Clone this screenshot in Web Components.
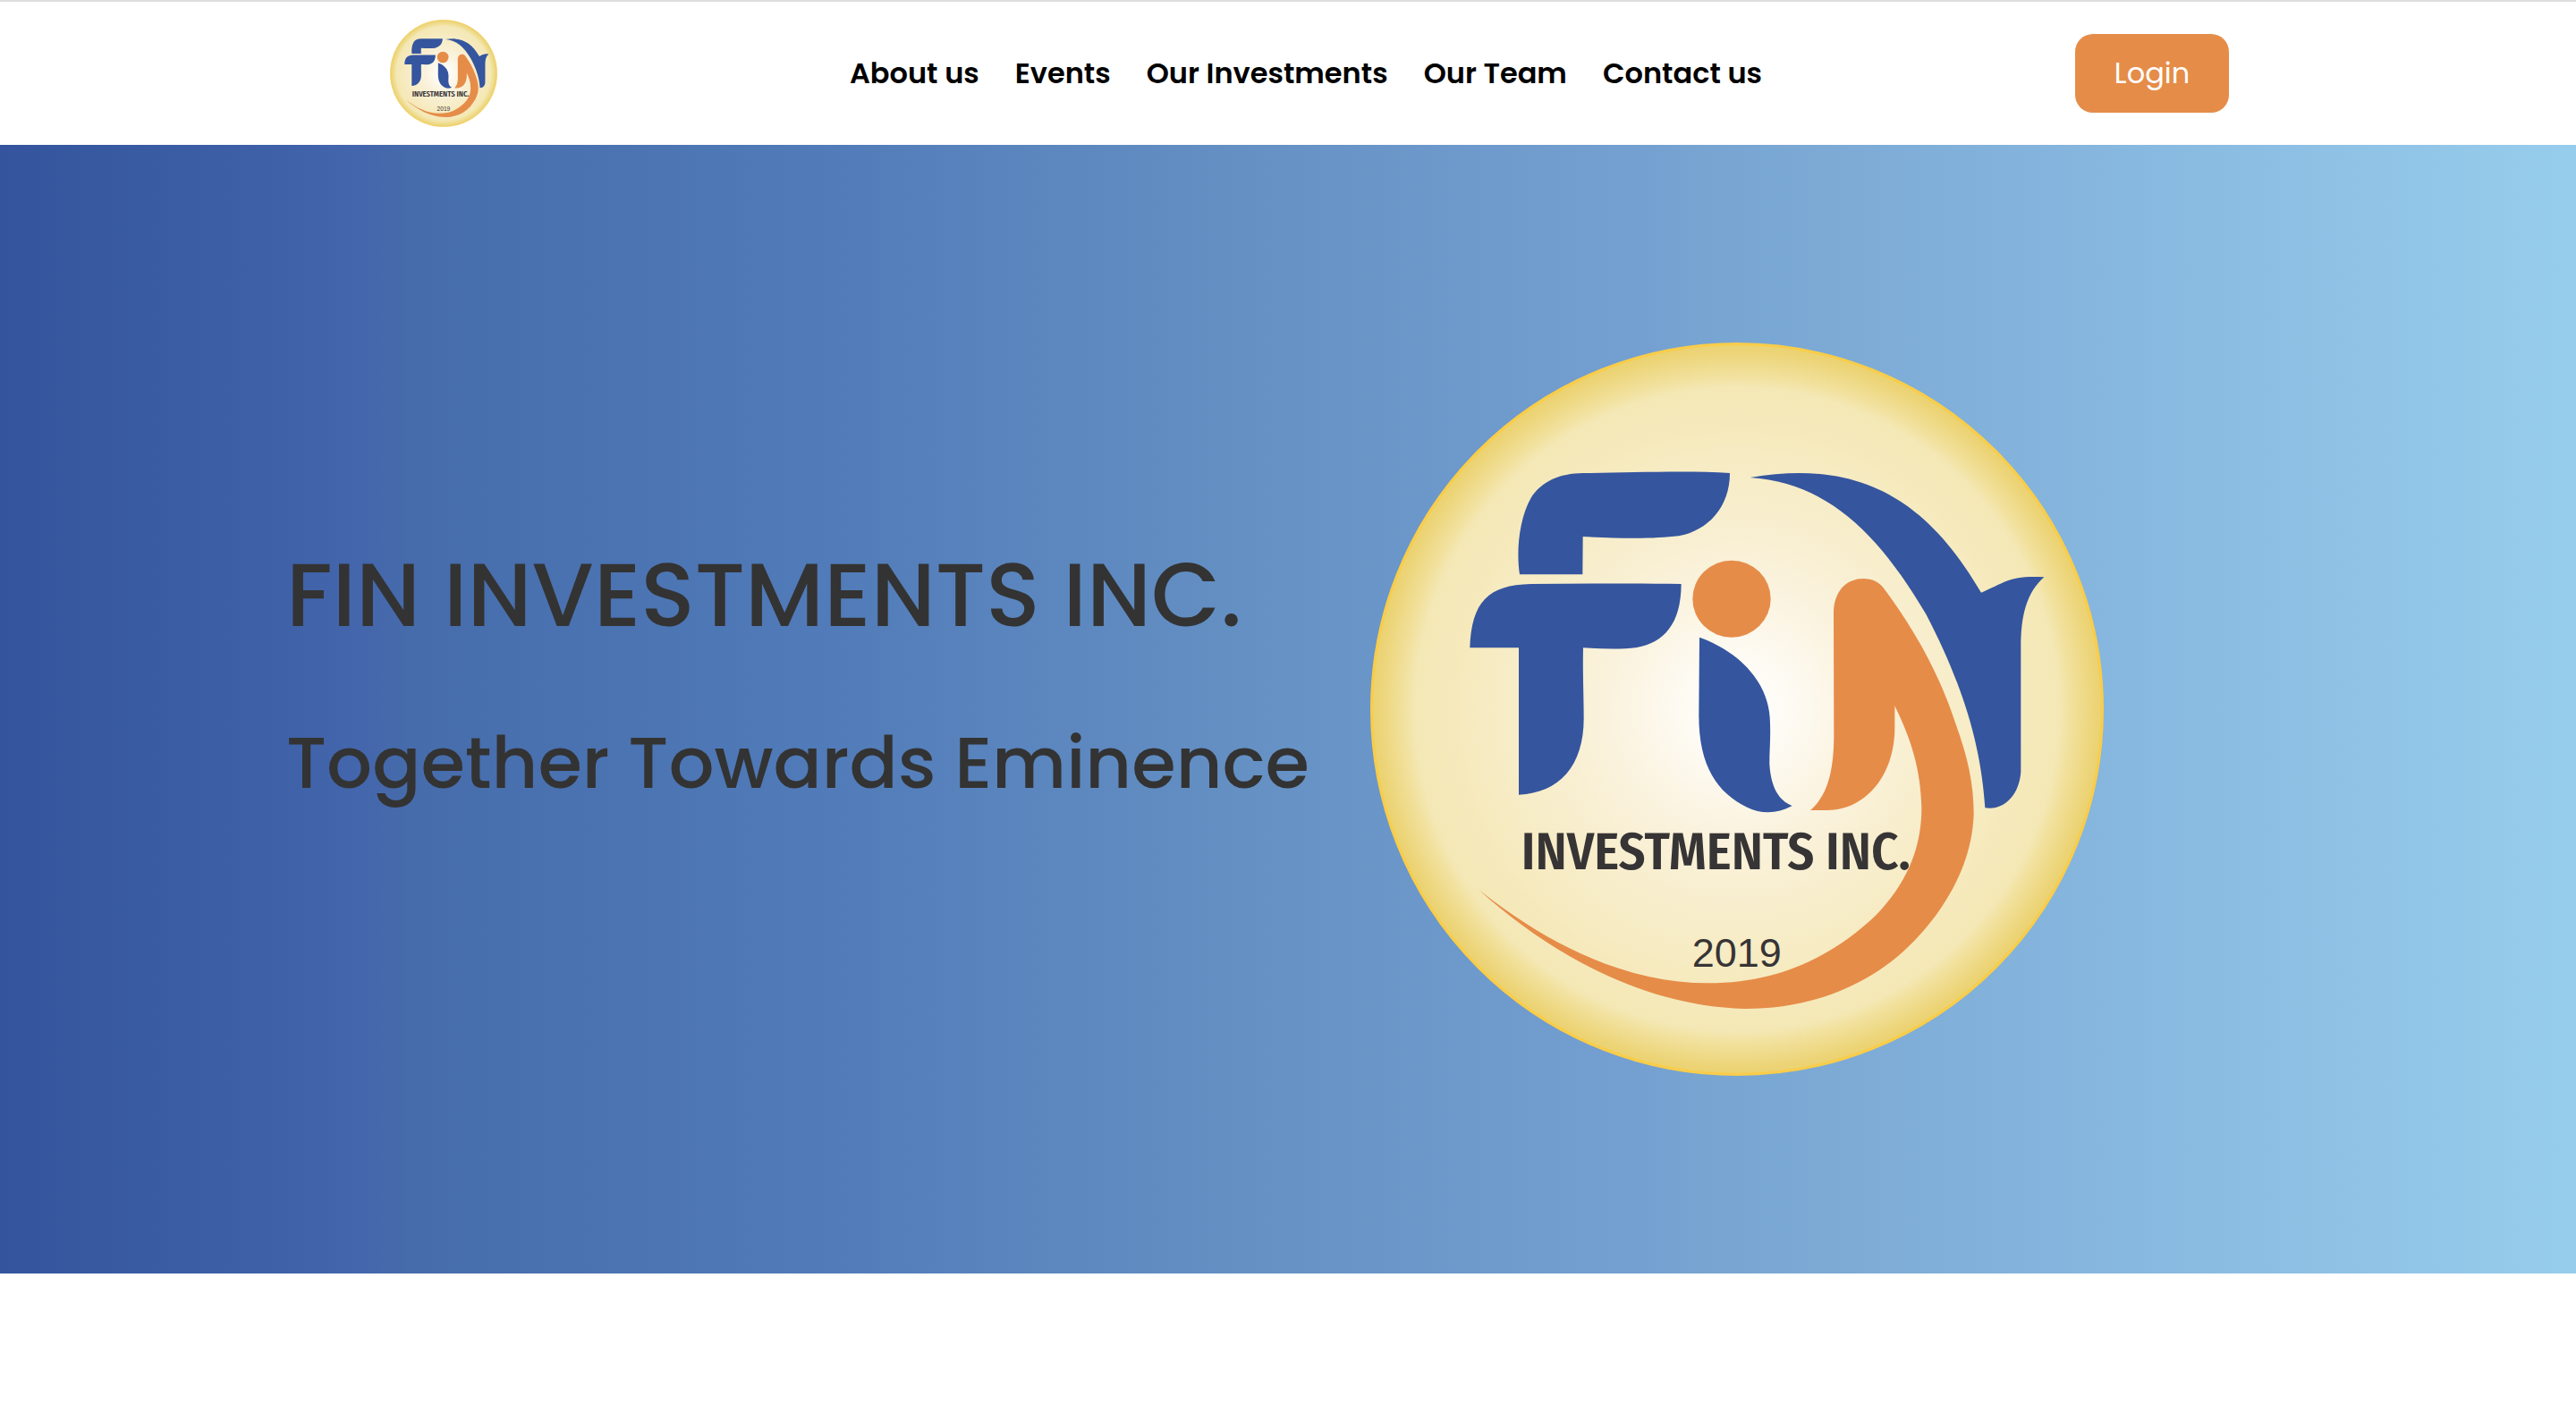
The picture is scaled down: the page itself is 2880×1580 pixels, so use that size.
<!DOCTYPE html>
<html lang="en">
<head>
<meta charset="utf-8">
<meta name="viewport" content="width=device-width, initial-scale=1">
<title>Fin Investments Inc.</title>
<style>
  body { margin: 0; background: #fff; font-family: Poppins, Inter, "Open Sans", sans-serif; }
</style>
</head>
<body>
<fin-header>
  <fin-logo></fin-logo>
  <fin-nav slot="nav">
    <fin-link href="#about">About us</fin-link>
    <fin-link href="#events">Events</fin-link>
    <fin-link href="#investments">Our Investments</fin-link>
    <fin-link href="#team">Our Team</fin-link>
    <fin-link href="#contact">Contact us</fin-link>
  </fin-nav>
  <fin-button slot="action">Login</fin-button>
</fin-header>
<fin-hero>
  <span slot="title">FIN INVESTMENTS INC.</span>
  <span slot="tagline">Together Towards Eminence</span>
  <fin-logo slot="art"></fin-logo>
</fin-hero>
<script>
const define = (name, html, setup) => {
  const template = document.createElement('template');
  template.innerHTML = html;
  customElements.define(name, class extends HTMLElement {
    constructor() {
      super();
      this.attachShadow({ mode: 'open' }).append(template.content.cloneNode(true));
    }
    connectedCallback() { if (setup) setup(this); }
  });
};

define('fin-logo', `
  <style>
    :host { display: block; }
    svg { display: block; width: 100%; height: auto; }
    .blue { fill: #35559e; }
    .orange { fill: #e68c49; }
    text { fill: #373435; }
    .name { font: 600 176px "Fira Sans Condensed", "Open Sans Condensed", "Liberation Sans", sans-serif; }
    .year { font: 400 135px "Liberation Sans", Arial, sans-serif; }
  </style>
  <svg viewBox="36 39 2460 2460" role="img" aria-label="Fin Investments Inc.">
    <defs>
      <radialGradient id="coin">
        <stop offset="0" stop-color="#fffefe"/>
        <stop offset=".14" stop-color="#fefbf4"/>
        <stop offset=".36" stop-color="#faf2dc"/>
        <stop offset=".6" stop-color="#f7edc9"/>
        <stop offset=".75" stop-color="#f6eabe"/>
        <stop offset=".88" stop-color="#f4e8b6"/>
        <stop offset=".91" stop-color="#f2e2a0"/>
        <stop offset=".98" stop-color="#ecd477"/>
        <stop offset="1" stop-color="#ebd272"/>
      </radialGradient>
    </defs>
    <circle cx="1266" cy="1269" r="1225" fill="url(#coin)" stroke="#f8cd4b" stroke-width="10"/>
    <path class="blue" d="M537 817C525 740 535 630 575 560C610 505 670 478 750 477C900 476 1100 468 1242 477C1242 590 1170 670 1070 688C990 698 880 697 749 690L748 817Z"/>
    <path class="blue" d="M370 1063C376 910 430 852 575 849C740 849 900 845 1079 849C1078 985 1020 1045 930 1062C870 1070 810 1066 750 1063C748 1150 752 1230 752 1300C752 1460 670 1550 534 1556V1063Z"/>
    <ellipse class="orange" cx="1248" cy="899" rx="131" ry="129"/>
    <path class="blue" d="M1140 1028C1260 1070 1378 1170 1377 1320C1379 1370 1374 1420 1375 1455C1380 1530 1405 1575 1451 1593C1400 1620 1350 1622 1300 1598C1200 1550 1138 1460 1138 1290Z"/>
    <path class="orange" d="M1590 950C1590 870 1635 831 1690 831C1720 831 1742 842 1757 862C1860 1000 1945 1150 2000 1320C2040 1430 2060 1520 2060 1620C2055 1780 1975 1920 1880 2025C1720 2205 1500 2275 1290 2274C960 2265 650 2100 400 1875C640 2065 900 2188 1170 2188C1420 2188 1600 2085 1730 1962C1840 1850 1885 1730 1885 1600C1882 1470 1850 1370 1795 1258V1330C1795 1500 1690 1608 1570 1608H1512C1580 1550 1591 1450 1591 1350Z"/>
    <path class="blue" d="M1310 492C1670 430 1900 560 2085 878C2170 842 2180 820 2296 826C2235 880 2218 960 2218 1060V1480C2212 1560 2160 1610 2098 1600C2085 1400 2030 1200 1900 950C1740 680 1570 510 1310 492Z"/>
    <text class="name" x="542" y="1806">INVESTMENTS INC.</text>
    <text class="year" x="1115" y="2132">2019</text>
  </svg>`);

define('fin-link', `
  <style>
    :host { display: block; }
    a { color: #000; text-decoration: none; font-size: 32px; line-height: 48px; font-weight: 600; white-space: nowrap; }
  </style>
  <a><slot></slot></a>`,
  el => { el.shadowRoot.querySelector('a').href = el.getAttribute('href'); });

define('fin-nav', `
  <style>
    :host { display: block; }
    nav { display: flex; gap: 40px; padding-left: 44px; }
  </style>
  <nav aria-label="Main"><slot></slot></nav>`);

define('fin-button', `
  <style>
    :host { display: block; }
    button { display: block; min-width: 172px; padding: 20px 40px; border: 0; border-radius: 20px; background: #e58c49; color: #fff; font: inherit; font-size: 32px; line-height: 48px; cursor: pointer; }
  </style>
  <button type="button"><slot></slot></button>`);

define('fin-header', `
  <style>
    :host { display: block; background: #fff; border-top: 2px solid #ddd; }
    header { box-sizing: border-box; max-width: 2104px; margin: 0 auto; padding: 20px 0 20px 48px; display: flex; align-items: center; justify-content: space-between; }
    .brand { width: 120px; }
  </style>
  <header>
    <div class="brand"><slot></slot></div>
    <slot name="nav"></slot>
    <slot name="action"></slot>
  </header>`);

define('fin-hero', `
  <style>
    :host { display: block; background: linear-gradient(90deg, #34559d 0%, #3e61a7 11%, #4466ac 14%, #466cab 16%, #507ab8 31%, #6591c4 49%, #739fd1 63%, #77a4d1 66%, #86b6de 81%, #97cdec 100%); }
    section { box-sizing: border-box; max-width: 2240px; margin: 0 auto; padding: 221px 0; display: grid; grid-template-columns: 1212fr 1028fr; align-items: center; }
    .copy { display: flex; flex-direction: column; gap: 80px; padding-bottom: 80px; color: #333; white-space: nowrap; }
    h1, h2 { margin: 0; font-weight: 500; }
    h1 { font-size: 100px; line-height: 120px; }
    h2 { font-size: 80px; line-height: 96px; }
    .art { max-width: 820px; }
  </style>
  <section>
    <div class="copy">
      <h1><slot name="title"></slot></h1>
      <h2><slot name="tagline"></slot></h2>
    </div>
    <div class="art"><slot name="art"></slot></div>
  </section>`);
</script>
</body>
</html>
